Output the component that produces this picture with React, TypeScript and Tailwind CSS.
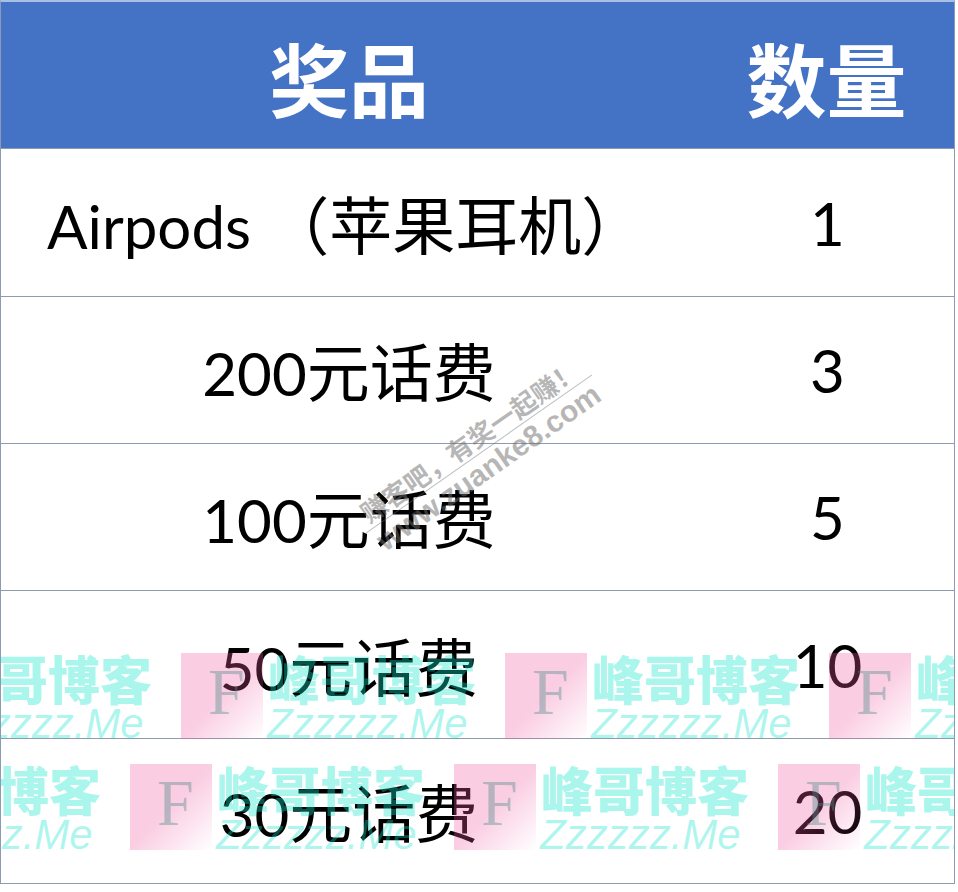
import React from "react";

type Part = { t: string; cjk?: boolean };

const rows: { parts: Part[]; qty: string; h: string; cls: string }[] = [
  {
    parts: [{ t: "Airpods " }, { t: "（苹果耳机）", cjk: true }],
    qty: "1",
    h: "h-[148px]",
    cls: "justify-start pl-[46px]",
  },
  { parts: [{ t: "200" }, { t: "元话费", cjk: true }], qty: "3", h: "h-[147px]", cls: "justify-center" },
  { parts: [{ t: "100" }, { t: "元话费", cjk: true }], qty: "5", h: "h-[147px]", cls: "justify-center" },
  { parts: [{ t: "50" }, { t: "元话费", cjk: true }], qty: "10", h: "h-[148px]", cls: "justify-center" },
  { parts: [{ t: "30" }, { t: "元话费", cjk: true }], qty: "20", h: "h-[146px]", cls: "justify-center" },
];

function Unit({ x, y }: { x: number; y: number }) {
  return (
    <div className="absolute w-[310px] h-[90px]" style={{ left: x, top: y }}>
      <div className="absolute left-0 top-0 w-[82px] h-[86px] bg-[linear-gradient(135deg,rgba(240,90,160,0.3)_50%,rgba(240,90,160,0)_100%)]">
        <span className="absolute left-[27px] top-[4px] text-[66px] leading-[70px] text-[rgba(80,140,140,0.4)] font-['Liberation_Serif',serif]">
          F
        </span>
      </div>
      <div className="absolute left-[87px] top-[-3px] text-[52px] leading-[56px] font-black whitespace-nowrap text-[rgba(20,230,205,0.36)] font-['Noto_Sans_CJK_SC',sans-serif]">
        峰哥博客
      </div>
      <div className="absolute left-[86px] top-[50px] text-[42px] leading-[42px] italic whitespace-nowrap text-[rgba(20,230,205,0.36)] font-['Liberation_Sans',sans-serif]">
        Zzzzzz.Me
      </div>
    </div>
  );
}

export default function App() {
  const rowA = [-144, 180, 504, 828];
  const rowB = [-195, 129, 453, 777];
  return (
    <div className="w-[958px] h-[892px] bg-white">
      <div className="relative w-[955px] border-t-2 border-t-[#a9bfe6] border-l border-r border-[#8a9bb3] overflow-hidden">
        <div className="grid grid-cols-[696px_1fr] h-[146px] bg-[#4472c4] items-center text-white font-bold text-[80px] leading-none font-['Noto_Sans_CJK_SC',sans-serif]">
          <div className="flex justify-center pt-[2px]">奖品</div>
          <div className="flex justify-center pt-[2px] pl-[2px]">数量</div>
        </div>
        {rows.map((r, i) => (
          <div
            key={i}
            className={`grid grid-cols-[696px_1fr] ${r.h} border-t border-[#8e9bae] bg-white items-center text-black text-[60px] leading-none font-['Lato','Noto_Sans_CJK_SC',sans-serif] ${
              i === rows.length - 1 ? "border-b" : ""
            }`}
          >
            <div className={`flex items-baseline ${r.cls} whitespace-pre`}>
              {r.parts.map((p, j) => (
                <span
                  key={j}
                  className={p.cjk ? "text-[63px] font-['Noto_Sans_CJK_SC',sans-serif]" : ""}
                >
                  {p.t}
                </span>
              ))}
            </div>
            <div className="flex justify-center pl-[4px]">{r.qty}</div>
          </div>
        ))}
        <div className="absolute inset-0 pointer-events-none overflow-hidden">
          {rowA.map((x) => (
            <Unit key={"a" + x} x={x} y={651} />
          ))}
          {rowB.map((x) => (
            <Unit key={"b" + x} x={x} y={762} />
          ))}
          <div className="absolute left-[478px] top-[452px] -translate-x-1/2 -translate-y-1/2 -rotate-[35deg] flex flex-col items-center text-[rgba(110,110,110,0.5)] font-bold">
            <div className="text-[26px] leading-[32px] whitespace-nowrap border-b border-[rgba(110,110,110,0.45)] px-[8px] font-['Noto_Sans_CJK_SC',sans-serif]">
              赚客吧，有奖一起赚！
            </div>
            <div className="text-[30px] leading-[32px] whitespace-nowrap font-['Liberation_Sans',sans-serif]">
              www.zuanke8.com
            </div>
          </div>
        </div>
      </div>
    </div>
  );
}
